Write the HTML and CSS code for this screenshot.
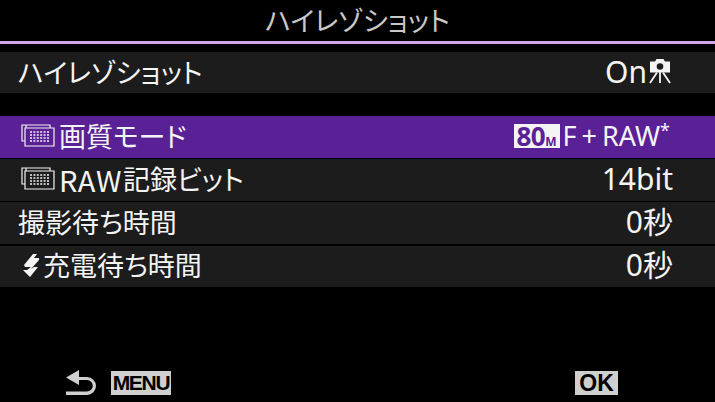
FILE: index.html
```html
<!DOCTYPE html>
<html lang="ja">
<head>
<meta charset="utf-8">
<title>ハイレゾショット</title>
<link rel="stylesheet" href="styles.css">
</head>
<body>
<div class="screen">
  <header class="title">ハイレゾショット</header>
  <div class="rule"></div>
  <section class="list first">
    <div class="row">
      <span class="label">ハイレゾショット</span>
      <span class="value">On<svg class="tripod" viewBox="0 0 22 25"><path d="M1 2.500h5l1.500-2.500h7l1.500 2.500h5v11h-20z" fill="#f4f4f4"/><circle cx="11" cy="7.500" r="3.300" fill="#1c1c1c"/><path d="M11 13v11M8 13.500l-7 10.500M14 13.500l7 10.500" stroke="#f4f4f4" stroke-width="1.800" fill="none"/></svg></span>
    </div>
  </section>
  <section class="list second">
    <div class="row selected">
      <span class="label"><svg class="card" viewBox="0 0 34 23"><use href="#cardicon"/></svg>画質モード</span>
      <span class="value"><span class="badge">80<small>M</small></span><span class="tight">F + RAW</span><sup>*</sup></span>
    </div>
    <div class="row">
      <span class="label"><svg class="card" viewBox="0 0 34 23"><defs><g id="cardicon" fill="none" stroke="currentColor" stroke-width="1.200"><path d="M5 4V1h24v3M5 1H1v16h3"/><path d="M4 4h29v18h-29z"/><path d="M9 8h19M9 11h19M9 14h19M9 17h19" stroke-dasharray="2 1.400" stroke-width="1.600"/></g></defs><use href="#cardicon"/></svg><span class="latin">RAW</span>記録ビット</span>
      <span class="value">14bit</span>
    </div>
    <div class="row">
      <span class="label">撮影待ち時間</span>
      <span class="value">0秒</span>
    </div>
    <div class="row">
      <span class="label"><svg class="flash" viewBox="0 0 18 23"><path d="M11 0L2 11l1 2h6L5 16H1l7 7 8-10h-4l-3 2 8-9V4h-5l3-4z" fill="#f4f4f4"/></svg>充電待ち時間</span>
      <span class="value">0秒</span>
    </div>
  </section>
  <footer class="footer">
    <div class="back">
      <svg class="arrow" viewBox="0 0 32 25"><path d="M14 0L1 7.500 14 15v-5h8a5.500 5.500 0 0 1 0 11.500H1V25h21a9 9 0 0 0 0-18H14z" fill="#cfcfcf"/></svg>
      <span class="key menu">MENU</span>
    </div>
    <span class="key ok">OK</span>
  </footer>
</div>
</body>
</html>
```
FILE: styles.css
```css
* { box-sizing: border-box; }
html, body { margin: 0; padding: 0; background: #000; }
.screen {
  width: 715px;
  height: 402px;
  background: #000;
  color: #f4f4f4;
  font-family: "Noto Sans CJK JP", "Noto Sans", sans-serif;
  font-feature-settings: "palt";
  display: flex;
  flex-direction: column;
  overflow: hidden;
}
.title {
  height: 41px;
  text-align: center;
  font-size: 27px;
  line-height: 39px;
  color: #c8c8c8;
}
.rule {
  height: 3px;
  background: #d3a6e8;
}
.list { display: flex; flex-direction: column; }
.first { margin-top: 8px; }
.first .row { height: 41px; }
.second { margin-top: 23px; gap: 1.700px; }
.row {
  height: 41.500px;
  padding: 0 42px 2px 18px;
  background: #1c1c1c;
  display: flex;
  justify-content: space-between;
  align-items: center;
  font-size: 27px;
  line-height: 38px;
}
.selected { background: #5a2096; }
.label { display: flex; align-items: center; }
.latin { font-size: 29px; letter-spacing: 0.500px; margin-right: 1px; }
.value { display: flex; align-items: center; font-size: 30px; font-family: "Noto Sans", "Noto Sans CJK JP", sans-serif; }
.tripod { width: 22px; height: 25px; margin-left: 2px; margin-right: 2px; }
.card { width: 34px; height: 23px; margin: 0 4px 0 3px; }
.flash { width: 18px; height: 23px; margin: 0 3px 0 4px; }
.badge {
  display: flex;
  align-items: baseline;
  justify-content: center;
  width: 46px;
  background: #f4f4f4;
  color: #5a2096;
  font-weight: 700;
  font-size: 26px;
  letter-spacing: -0.500px;
  line-height: 24px;
  height: 24px;
  margin-right: 3px;
}
.badge small { font-size: 12px; line-height: 12px; letter-spacing: 0; }
.tight { font-size: 27px; word-spacing: -2px; }
.value sup { font-size: 18px; line-height: 18px; align-self: flex-start; margin: 4px 3px 0 0; }
.footer {
  flex: 1;
  display: flex;
  align-items: flex-end;
  justify-content: space-between;
  padding: 0 97px 7px 65px;
}
.back { display: flex; align-items: center; gap: 14px; }
.arrow { width: 32px; height: 25px; }
.key {
  background: #cfcfcf;
  color: #000;
  font-family: "Liberation Sans", sans-serif;
  font-weight: 700;
  line-height: 24px;
  height: 24px;
  font-size: 21px;
  text-align: center;
}
.menu { width: 60px; font-size: 21px; letter-spacing: -1.300px; }
.ok { width: 43px; font-size: 23px; }
```
